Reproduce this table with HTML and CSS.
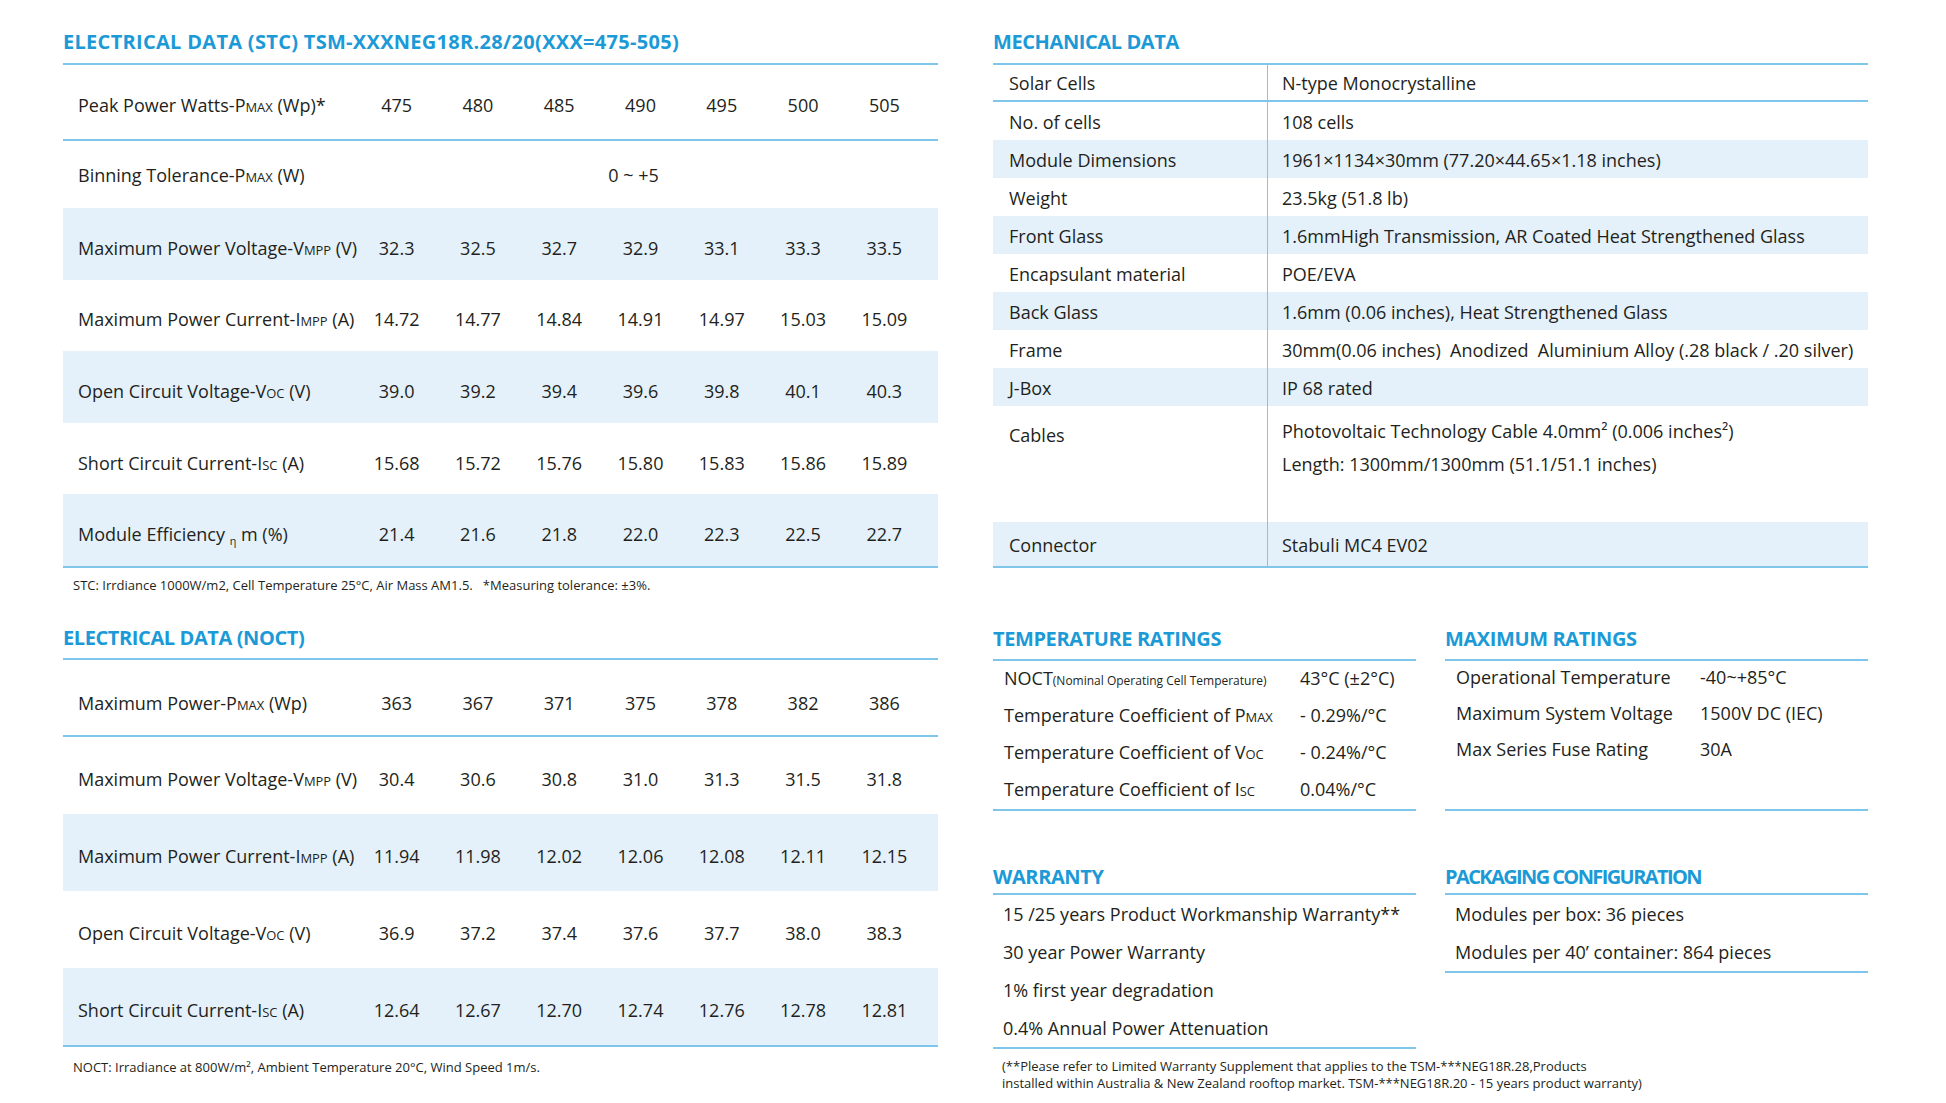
FILE: index.html
```html
<!DOCTYPE html>
<html lang="en">
<head>
<meta charset="utf-8">
<title>TSM-NEG18R.28 Datasheet</title>
<link rel="stylesheet" href="styles.css">
</head>
<body>
<div class="page">
  <div class="col">
    <section class="stc">
      <h2 class="title t-stc">ELECTRICAL DATA (STC) TSM-XXXNEG18R.28/20(XXX=475-505)</h2>
      <div class="etable">
        <div class="erow first">
          <div class="lbl">Peak Power Watts-P<span class="sc">MAX</span> (Wp)*</div>
          <div class="v">475</div><div class="v">480</div><div class="v">485</div><div class="v">490</div><div class="v">495</div><div class="v">500</div><div class="v">505</div>
        </div>
        <div class="erow second">
          <div class="lbl">Binning Tolerance-P<span class="sc">MAX</span> (W)</div>
          <div class="v span7">0 ~ +5</div>
        </div>
        <div class="erow band">
          <div class="lbl">Maximum Power Voltage-V<span class="sc">MPP</span> (V)</div>
          <div class="v">32.3</div><div class="v">32.5</div><div class="v">32.7</div><div class="v">32.9</div><div class="v">33.1</div><div class="v">33.3</div><div class="v">33.5</div>
        </div>
        <div class="erow">
          <div class="lbl">Maximum Power Current-I<span class="sc">MPP</span> (A)</div>
          <div class="v">14.72</div><div class="v">14.77</div><div class="v">14.84</div><div class="v">14.91</div><div class="v">14.97</div><div class="v">15.03</div><div class="v">15.09</div>
        </div>
        <div class="erow band">
          <div class="lbl">Open Circuit Voltage-V<span class="sc">OC</span> (V)</div>
          <div class="v">39.0</div><div class="v">39.2</div><div class="v">39.4</div><div class="v">39.6</div><div class="v">39.8</div><div class="v">40.1</div><div class="v">40.3</div>
        </div>
        <div class="erow">
          <div class="lbl">Short Circuit Current-I<span class="sc">SC</span> (A)</div>
          <div class="v">15.68</div><div class="v">15.72</div><div class="v">15.76</div><div class="v">15.80</div><div class="v">15.83</div><div class="v">15.86</div><div class="v">15.89</div>
        </div>
        <div class="erow band">
          <div class="lbl">Module Efficiency <span class="eta">η</span> m (%)</div>
          <div class="v">21.4</div><div class="v">21.6</div><div class="v">21.8</div><div class="v">22.0</div><div class="v">22.3</div><div class="v">22.5</div><div class="v">22.7</div>
        </div>
      </div>
      <p class="note stc-note">STC: Irrdiance 1000W/m2, Cell Temperature 25°C, Air Mass AM1.5. &nbsp; *Measuring tolerance: ±3%.</p>
    </section>

    <section class="noct">
      <h2 class="title">ELECTRICAL DATA (NOCT)</h2>
      <div class="etable">
        <div class="erow first">
          <div class="lbl">Maximum Power-P<span class="sc">MAX</span> (Wp)</div>
          <div class="v">363</div><div class="v">367</div><div class="v">371</div><div class="v">375</div><div class="v">378</div><div class="v">382</div><div class="v">386</div>
        </div>
        <div class="erow">
          <div class="lbl">Maximum Power Voltage-V<span class="sc">MPP</span> (V)</div>
          <div class="v">30.4</div><div class="v">30.6</div><div class="v">30.8</div><div class="v">31.0</div><div class="v">31.3</div><div class="v">31.5</div><div class="v">31.8</div>
        </div>
        <div class="erow band">
          <div class="lbl">Maximum Power Current-I<span class="sc">MPP</span> (A)</div>
          <div class="v">11.94</div><div class="v">11.98</div><div class="v">12.02</div><div class="v">12.06</div><div class="v">12.08</div><div class="v">12.11</div><div class="v">12.15</div>
        </div>
        <div class="erow">
          <div class="lbl">Open Circuit Voltage-V<span class="sc">OC</span> (V)</div>
          <div class="v">36.9</div><div class="v">37.2</div><div class="v">37.4</div><div class="v">37.6</div><div class="v">37.7</div><div class="v">38.0</div><div class="v">38.3</div>
        </div>
        <div class="erow band">
          <div class="lbl">Short Circuit Current-I<span class="sc">SC</span> (A)</div>
          <div class="v">12.64</div><div class="v">12.67</div><div class="v">12.70</div><div class="v">12.74</div><div class="v">12.76</div><div class="v">12.78</div><div class="v">12.81</div>
        </div>
      </div>
      <p class="note noct-note">NOCT: Irradiance at 800W/m², Ambient Temperature 20°C, Wind Speed 1m/s.</p>
    </section>
  </div>

  <div class="col">
    <section class="mech">
      <h2 class="title">MECHANICAL DATA</h2>
      <div class="mtable">
        <div class="mrow top"><div class="ml">Solar Cells</div><div class="mv">N-type Monocrystalline</div></div>
        <div class="mrow"><div class="ml">No. of cells</div><div class="mv">108 cells</div></div>
        <div class="mrow band"><div class="ml">Module Dimensions</div><div class="mv">1961×1134×30mm (77.20×44.65×1.18 inches)</div></div>
        <div class="mrow"><div class="ml">Weight</div><div class="mv">23.5kg (51.8 lb)</div></div>
        <div class="mrow band"><div class="ml">Front Glass</div><div class="mv">1.6mmHigh Transmission, AR Coated Heat Strengthened Glass</div></div>
        <div class="mrow"><div class="ml">Encapsulant material</div><div class="mv">POE/EVA</div></div>
        <div class="mrow band"><div class="ml">Back Glass</div><div class="mv">1.6mm (0.06 inches), Heat Strengthened Glass</div></div>
        <div class="mrow"><div class="ml">Frame</div><div class="mv">30mm(0.06 inches)&nbsp; Anodized&nbsp; Aluminium Alloy (.28 black / .20 silver)</div></div>
        <div class="mrow band"><div class="ml">J-Box</div><div class="mv">IP 68 rated</div></div>
        <div class="mrow cables"><div class="ml">Cables</div><div class="mv">Photovoltaic Technology Cable 4.0mm² (0.006 inches²)<br>Length: 1300mm/1300mm (51.1/51.1 inches)</div></div>
        <div class="mrow band conn"><div class="ml">Connector</div><div class="mv">Stabuli MC4 EV02</div></div>
      </div>
    </section>

    <div class="pair ratings">
      <section class="block">
        <h2 class="title">TEMPERATURE RATINGS</h2>
        <div class="list temp">
          <div class="lrow"><div>NOCT<span class="tiny">(Nominal Operating Cell Temperature)</span></div><div>43°C (±2°C)</div></div>
          <div class="lrow"><div>Temperature Coefficient of P<span class="sc">MAX</span></div><div>- 0.29%/°C</div></div>
          <div class="lrow"><div>Temperature Coefficient of V<span class="sc">OC</span></div><div>- 0.24%/°C</div></div>
          <div class="lrow"><div>Temperature Coefficient of I<span class="sc">SC</span></div><div>0.04%/°C</div></div>
        </div>
      </section>
      <section class="block">
        <h2 class="title">MAXIMUM RATINGS</h2>
        <div class="list maxr">
          <div class="lrow"><div>Operational Temperature</div><div>-40~+85°C</div></div>
          <div class="lrow"><div>Maximum System Voltage</div><div>1500V DC (IEC)</div></div>
          <div class="lrow"><div>Max Series Fuse Rating</div><div>30A</div></div>
        </div>
      </section>
    </div>

    <div class="pair warr">
      <section class="block">
        <h2 class="title">WARRANTY</h2>
        <div class="list plain">
          <div class="prow">15 /25 years Product Workmanship Warranty**</div>
          <div class="prow">30 year Power Warranty</div>
          <div class="prow">1% first year degradation</div>
          <div class="prow">0.4% Annual Power Attenuation</div>
        </div>
      </section>
      <section class="block">
        <h2 class="title t-pack">PACKAGING CONFIGURATION</h2>
        <div class="list plain">
          <div class="prow">Modules per box: 36 pieces</div>
          <div class="prow">Modules per 40’ container: 864 pieces</div>
        </div>
      </section>
    </div>
    <p class="footnote">(**Please refer to Limited Warranty Supplement that applies to the TSM-***NEG18R.28,Products<br>installed within Australia &amp; New Zealand rooftop market. TSM-***NEG18R.20 - 15 years product warranty)</p>
  </div>
</div>
</body>
</html>
```

FILE: styles.css
```css
* { box-sizing: border-box; }

html, body {
  margin: 0;
  padding: 0;
  background: #ffffff;
}

body {
  font-family: "Open Sans", "Noto Sans", "Liberation Sans", sans-serif;
  color: #231f20;
  font-size: 18px;
}

.page {
  display: grid;
  grid-template-columns: 875px 875px;
  column-gap: 55px;
  padding-left: 63px;
}

.title {
  margin: 0;
  padding: 28px 0 7px 0;
  line-height: 28px;
  font-size: 20px;
  font-weight: 700;
  letter-spacing: -0.4px;
  color: #1b9ad7;
  border-bottom: 2px solid #80c5ea;
  white-space: nowrap;
}

.t-stc {
  letter-spacing: 0.3px;
}

.t-pack {
  letter-spacing: -1.6px;
}

.sc {
  font-size: 0.72em;
  text-transform: uppercase;
}

.eta {
  font-size: 0.6em;
  position: relative;
  top: 0.35em;
}

.band { background: #e4f1fa; }

/* Electrical tables */
.etable {
  border-bottom: 2px solid #80c5ea;
}

.erow {
  display: grid;
  grid-template-columns: 293px repeat(7, 1fr);
  padding-right: 13px;
  padding-top: 8px;
  align-items: center;
  height: 71.6px;
}

.erow .lbl {
  padding-left: 15px;
  white-space: nowrap;
}

.erow .v {
  text-align: center;
}

.erow .span7 {
  grid-column: 2 / span 7;
  padding-right: 14px;
}

.stc .erow.first {
  height: 76px;
  padding-top: 5px;
  border-bottom: 2px solid #80c5ea;
}

.stc .erow.second {
  height: 67px;
  padding-top: 0;
}

.noct .erow {
  height: 77px;
}

.noct .erow.first {
  height: 77px;
  padding-top: 12px;
  border-bottom: 2px solid #80c5ea;
}

.note {
  margin: 0;
  font-size: 13px;
  line-height: 18px;
  padding-left: 10px;
  white-space: nowrap;
}

.stc-note {
  padding-top: 8px;
  height: 27px;
}

.noct .title {
  padding-top: 29px;
  padding-bottom: 6px;
}

.noct-note {
  padding-top: 11px;
}

/* Mechanical table */
.mtable {
  border-bottom: 2px solid #80c5ea;
}

.mrow {
  display: grid;
  grid-template-columns: 274px 1fr;
  height: 38px;
}

.mrow .ml {
  padding-left: 16px;
  padding-top: 2px;
  display: flex;
  align-items: center;
}

.mrow .mv {
  padding-left: 14px;
  padding-top: 2px;
  border-left: 1px solid #80c5ea;
  display: flex;
  align-items: center;
  white-space: nowrap;
}

.mrow.top {
  height: 37px;
  border-bottom: 2px solid #80c5ea;
}

.mrow.top .ml,
.mrow.top .mv {
  padding-top: 0;
}

.mrow.cables {
  height: 116px;
}

.mrow.cables .ml,
.mrow.cables .mv {
  display: block;
  line-height: 33px;
}

.mrow.cables .ml { padding-top: 13px; }
.mrow.cables .mv { padding-top: 9px; }

.mrow.conn {
  height: 44px;
}

/* Lower pairs */
.pair {
  display: grid;
  grid-template-columns: 423px 423px;
  column-gap: 29px;
}

.block {
  display: flex;
  flex-direction: column;
}

.ratings .title {
  padding-top: 57px;
  padding-bottom: 6px;
}

.list {
  border-bottom: 2px solid #80c5ea;
}

.ratings .list {
  flex: 1;
  min-height: 150px;
}

.lrow {
  display: grid;
  height: 37px;
  align-items: center;
  padding-left: 11px;
  padding-bottom: 4px;
  white-space: nowrap;
}

.maxr .lrow {
  height: 36px;
}

.temp .lrow { grid-template-columns: 296px 1fr; }
.maxr .lrow { grid-template-columns: 244px 1fr; }

.tiny {
  font-size: 12px;
}

.warr {
  align-items: start;
}

.warr .title {
  padding-top: 52px;
  padding-bottom: 2px;
}

.prow {
  height: 38px;
  display: flex;
  align-items: center;
  padding-left: 10px;
  white-space: nowrap;
}

.footnote {
  margin: 0;
  padding: 9px 0 0 9px;
  font-size: 13px;
  line-height: 16.5px;
  white-space: nowrap;
}
```
